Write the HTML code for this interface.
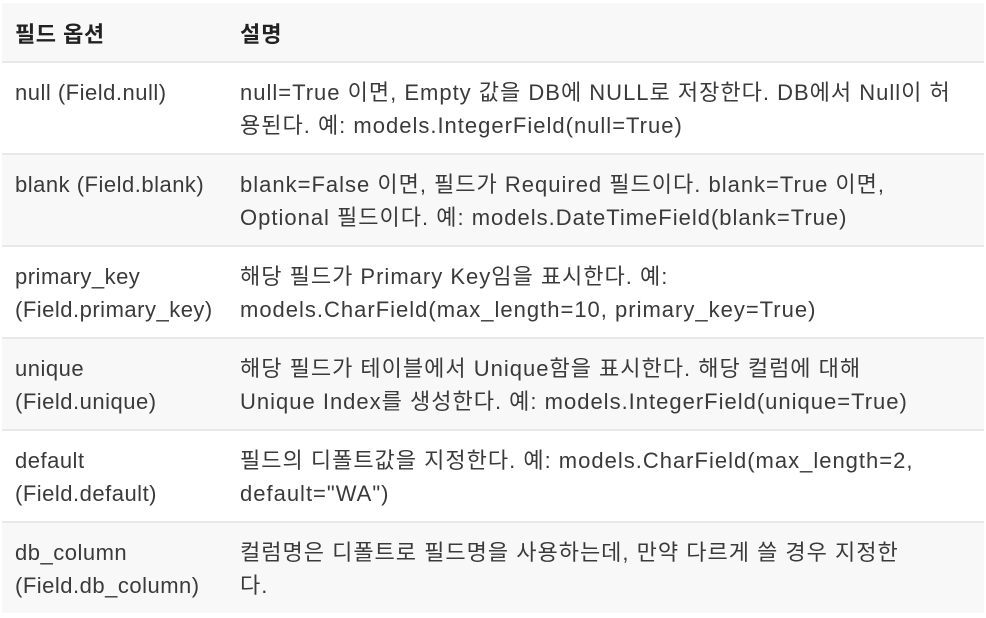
<!DOCTYPE html>
<html><head><meta charset="utf-8"><style>
body{margin:0;background:#fff;width:986px;height:618px;overflow:hidden}
table{position:absolute;left:2px;top:3px;width:982px;table-layout:fixed;border-collapse:collapse;font-family:"Liberation Sans","Noto Sans CJK KR",sans-serif;font-size:22px;letter-spacing:0.5px;color:#3a3a3a;line-height:33px;white-space:nowrap}
td,th{text-align:left;vertical-align:top;padding:13px 0 11px 13px;border-bottom:2px solid #e8e8e8;box-sizing:border-box;height:91px}
th{font-weight:bold;color:#222;padding:15px 0 10px 13px;height:59px}
tr:nth-child(odd){background:#f8f8f8}
tr:last-child td{border-bottom:none;height:90px}
td:last-child,th:last-child{padding-left:0;letter-spacing:1px}
</style></head><body>
<table>
<colgroup><col style="width:238px"><col></colgroup>
<tr><th>필드 옵션</th><th>설명</th></tr>
<tr><td>null (Field.null)</td><td>null=True 이면, Empty 값을 DB에 NULL로 저장한다. DB에서 Null이 허<br>용된다. 예: models.IntegerField(null=True)</td></tr>
<tr><td>blank (Field.blank)</td><td>blank=False 이면, 필드가 Required 필드이다. blank=True 이면,<br>Optional 필드이다. 예: models.DateTimeField(blank=True)</td></tr>
<tr><td>primary_key<br>(Field.primary_key)</td><td>해당 필드가 Primary Key임을 표시한다. 예:<br>models.CharField(max_length=10, primary_key=True)</td></tr>
<tr><td>unique<br>(Field.unique)</td><td>해당 필드가 테이블에서 Unique함을 표시한다. 해당 컬럼에 대해<br>Unique Index를 생성한다. 예: models.IntegerField(unique=True)</td></tr>
<tr><td>default<br>(Field.default)</td><td>필드의 디폴트값을 지정한다. 예: models.CharField(max_length=2,<br>default="WA")</td></tr>
<tr><td>db_column<br>(Field.db_column)</td><td>컬럼명은 디폴트로 필드명을 사용하는데, 만약 다르게 쓸 경우 지정한<br>다.</td></tr>
</table>
</body></html>
